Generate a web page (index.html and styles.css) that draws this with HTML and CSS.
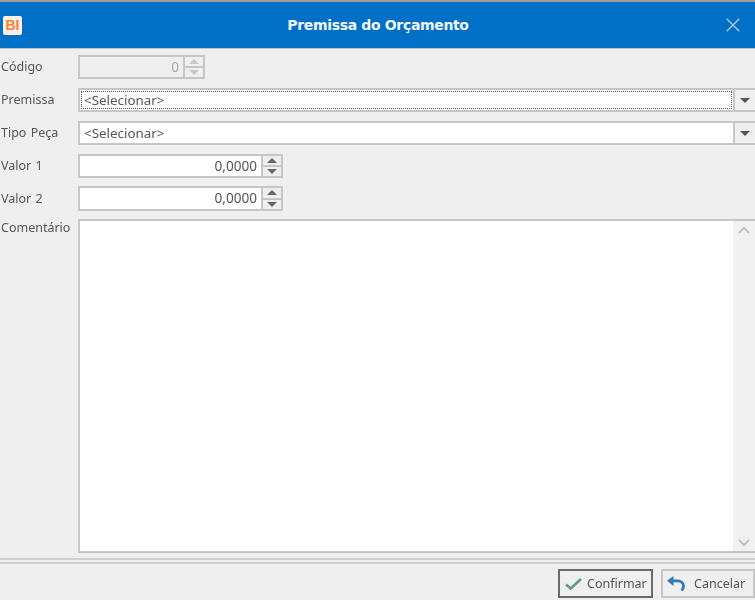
FILE: index.html
```html
<!DOCTYPE html>
<html lang="pt">
<head>
<meta charset="utf-8">
<title>Premissa do Orçamento</title>
<link rel="stylesheet" href="styles.css">
</head>
<body>
<div class="dialog">
  <header class="titlebar">
    <span class="logo">BI</span>
    <h1 class="title">Premissa do Orçamento</h1>
    <svg class="close" width="14" height="14" viewBox="0 0 14 14"><path d="M.7.7l12.600 12.600M13.300.7L.7 13.300" stroke="#a9c9e6" stroke-width="1.4" fill="none"/></svg>
  </header>
  <main class="form">
    <div class="row">
      <label class="label">Código</label>
      <div class="spin spin-small">
        <div class="input input-disabled num">0</div>
        <div class="spin-btns spin-btns-disabled">
          <span class="spin-btn"><svg width="10" height="5" viewBox="0 0 10 5"><path d="M5 0l5 5H0z"/></svg></span>
          <span class="spin-btn"><svg width="10" height="5" viewBox="0 0 10 5"><path d="M0 0h10L5 5z"/></svg></span>
        </div>
      </div>
    </div>
    <div class="row">
      <label class="label">Premissa</label>
      <div class="combo">
        <div class="input combo-text"><span class="focus">&lt;Selecionar&gt;</span></div>
        <span class="combo-btn"><svg width="10" height="5" viewBox="0 0 10 5"><path d="M0 0h10L5 5z"/></svg></span>
      </div>
    </div>
    <div class="row">
      <label class="label">Tipo Peça</label>
      <div class="combo">
        <div class="input combo-text"><span class="plain">&lt;Selecionar&gt;</span></div>
        <span class="combo-btn"><svg width="10" height="5" viewBox="0 0 10 5"><path d="M0 0h10L5 5z"/></svg></span>
      </div>
    </div>
    <div class="row">
      <label class="label">Valor 1</label>
      <div class="spin spin-large">
        <div class="input num">0,0000</div>
        <div class="spin-btns">
          <span class="spin-btn"><svg width="10" height="5" viewBox="0 0 10 5"><path d="M5 0l5 5H0z"/></svg></span>
          <span class="spin-btn"><svg width="10" height="5" viewBox="0 0 10 5"><path d="M0 0h10L5 5z"/></svg></span>
        </div>
      </div>
    </div>
    <div class="row row-tall">
      <label class="label">Valor 2</label>
      <div class="spin spin-large">
        <div class="input num">0,0000</div>
        <div class="spin-btns">
          <span class="spin-btn"><svg width="10" height="5" viewBox="0 0 10 5"><path d="M5 0l5 5H0z"/></svg></span>
          <span class="spin-btn"><svg width="10" height="5" viewBox="0 0 10 5"><path d="M0 0h10L5 5z"/></svg></span>
        </div>
      </div>
    </div>
    <div class="row row-memo">
      <label class="label">Comentário</label>
      <div class="memo">
        <div class="memo-bar">
          <svg width="12" height="8" viewBox="0 0 12 8"><path d="M1 7l5-5 5 5" fill="none" stroke="#c2c2c2" stroke-width="2"/></svg>
          <svg width="12" height="8" viewBox="0 0 12 8"><path d="M1 1l5 5 5-5" fill="none" stroke="#c2c2c2" stroke-width="2"/></svg>
        </div>
      </div>
    </div>
  </main>
  <footer class="footer">
    <button class="btn btn-primary" type="button">
      <svg width="17" height="12" viewBox="0 0 17 12"><path d="M1 6.500l4.700 4L16 1" fill="none" stroke="#5f9d82" stroke-width="2.600"/></svg>
      Confirmar
    </button>
    <button class="btn btn-cancel" type="button">
      <svg width="18" height="15" viewBox="0 0 18 15"><path d="M5 4.800h5.500c3.500 0 6 2.200 6 5 0 1.900-.8 3.600-2 4.700" fill="none" stroke="#2f79bd" stroke-width="2.800"/><path d="M6.500 0v10L0 4.800z" fill="#2f79bd"/></svg>
      Cancelar
    </button>
  </footer>
</div>
</body>
</html>
```
FILE: styles.css
```css
* { box-sizing: border-box; }
html, body { margin: 0; padding: 0; }
body {
  width: 755px;
  height: 600px;
  overflow: hidden;
  background: #efefef;
  font-family: "Noto Sans", "Open Sans", sans-serif;
  font-size: 12.5px;
  color: #555;
}
.dialog {
  width: 755px;
  height: 600px;
  display: flex;
  flex-direction: column;
  filter: blur(0.45px);
}
.titlebar {
  height: 49px;
  flex: none;
  display: flex;
  align-items: center;
  background: #0070c6;
  border-top: 2px solid #9d9d9d;
  border-bottom: 1px solid #b9c4cc;
  padding: 0 15px 0 3px;
}
.logo {
  width: 19px;
  height: 19px;
  flex: none;
  background: #fbf0e6;
  border-radius: 2px;
  color: #f5803a;
  font: bold 14px/19px "Liberation Sans", sans-serif;
  text-align: center;
}
.title {
  flex: 1;
  margin: 0;
  padding-left: 8px;
  text-align: center;
  color: #f2f7fb;
  font: bold 14px/1 "DejaVu Sans", sans-serif;
  letter-spacing: -0.34px;
}
.close { flex: none; }
.form {
  flex: 1;
  display: flex;
  flex-direction: column;
  gap: 9px;
  padding: 6px 0 5px;
}
.row {
  display: flex;
  height: 24px;
  flex: none;
  align-items: center;
}
.row-tall {
  height: 25px;
  margin-top: -1px;
}
.row-memo {
  flex: 1;
  margin-top: -1px;
  align-items: flex-start;
}
.label {
  width: 78px;
  flex: none;
  padding-left: 1px;
  line-height: 24px;
  word-spacing: 1px;
}
.row-memo .label { line-height: 18px; }
.input {
  height: 100%;
  background: #fff;
  border: 2px solid #c6c6c6;
  border-right-width: 1px;
  font-size: 13.6px;
  line-height: 19px;
}
.input-disabled { background: #efefef; color: #a8a8a8; }
.num { flex: 1; text-align: right; padding-right: 4px; }
.spin { display: flex; height: 100%; }
.spin-small { width: 127px; }
.spin-large { width: 205px; }
.spin-btns {
  width: 21px;
  flex: none;
  display: flex;
  flex-direction: column;
  border: 2px solid #c6c6c6;
  border-left-width: 1px;
  background: #efefef;
}
.spin-btn {
  flex: 1;
  display: flex;
  align-items: center;
  justify-content: center;
}
.spin-btn + .spin-btn { border-top: 2px solid #c6c6c6; }
.spin-btn path { fill: #666; }
.spin-btns-disabled path { fill: #c8c8c8; }
.combo { flex: 1; display: flex; height: 100%; }
.combo-text { flex: 1; padding: 1px; display: flex; font-size: 13.4px; }
.focus, .plain {
  flex: 1;
  padding-left: 2px;
  line-height: 16px;
}
.focus { border: 1px dotted #555; }
.plain { border: 1px solid transparent; }
.combo-btn {
  width: 21px;
  flex: none;
  display: flex;
  align-items: center;
  justify-content: center;
  border-top: 2px solid #c6c6c6;
  border-bottom: 2px solid #c6c6c6;
  border-left: 1px solid #c6c6c6;
}
.combo-btn path { fill: #555; }
.memo {
  flex: 1;
  height: 100%;
  display: flex;
  justify-content: flex-end;
  background: #fff;
  border: 2px solid #c6c6c6;
  border-right: 0;
}
.memo-bar {
  width: 22px;
  display: flex;
  flex-direction: column;
  justify-content: space-between;
  align-items: center;
  padding: 5px 0 4px;
  background: #f1f1f1;
}
.footer {
  height: 42px;
  flex: none;
  display: flex;
  justify-content: flex-end;
  gap: 8px;
  padding: 5px 0 2px;
  background: #efefef;
  border-top: 6px double #cfcfcf;
}
.btn {
  height: 29px;
  display: flex;
  align-items: center;
  gap: 5px;
  background: #efefef;
  color: #555;
  font: inherit;
  padding: 0 0 0 5px;
  border: 2px solid #c6c6c6;
}
.btn-primary { width: 95px; border-color: #6b6b6b; }
.btn-cancel { width: 94px; gap: 9px; padding-left: 4px; }
```
